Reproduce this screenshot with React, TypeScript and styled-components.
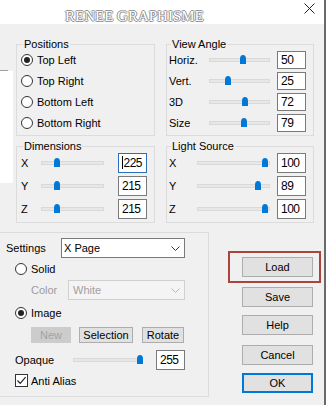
import React from 'react';
import styled, { createGlobalStyle } from 'styled-components';

const GlobalStyle = createGlobalStyle`
  html, body {
    margin: 0;
    padding: 0;
    background: #f0f0f0;
  }
  body {
    font-family: "Liberation Sans", Arial, sans-serif;
    font-size: 11px;
    color: #000;
  }
`;

const viewAngle = [
  { label: 'Horiz.', value: 50, pos: 0.566 },
  { label: 'Vert.', value: 25, pos: 0.31 },
  { label: '3D', value: 72, pos: 0.59 },
  { label: 'Size', value: 79, pos: 0.574 },
];

const dimensions = [
  { label: 'X', value: 225, pos: 0.254, focus: true },
  { label: 'Y', value: 215, pos: 0.238 },
  { label: 'Z', value: 215, pos: 0.238 },
];

const lightSource = [
  { label: 'X', value: 100, pos: 0.945 },
  { label: 'Y', value: 89, pos: 0.85 },
  { label: 'Z', value: 100, pos: 0.945 },
];

const positions = ['Top Left', 'Top Right', 'Bottom Left', 'Bottom Right'];

export default function App() {
  return (
    <>
      <GlobalStyle />
      <Window>
        <TitleBar>
          <TitleText>RENEE GRAPHISME</TitleText>
          <CloseIcon width="11" height="11" viewBox="0 0 11 11">
            <path d="M0.5 0.5 L10.5 10.5 M10.5 0.5 L0.5 10.5" stroke="#222" strokeWidth="1" />
          </CloseIcon>
        </TitleBar>

        <Content>
          <TopArea>
            <Strip>
              <StripLine />
              <StripFill />
            </Strip>
            <Groups>
              <Group $pl={4}>
                <Legend>Positions</Legend>
                <Rows>
                  {positions.map((p, i) => (
                    <RadioRow key={p} $h={21}>
                      <Radio $checked={i === 0} />
                      {p}
                    </RadioRow>
                  ))}
                </Rows>
              </Group>

              <Group $pl={2}>
                <Legend>View Angle</Legend>
                <Rows>
                  {viewAngle.map((r) => (
                    <SliderRow key={r.label} $h={21}>
                      <RowLabel $w={40}>{r.label}</RowLabel>
                      <Slider w={61} pos={r.pos} />
                      <NumBox $h={18} $gap={7}>{r.value}</NumBox>
                    </SliderRow>
                  ))}
                </Rows>
              </Group>

              <Group $pl={4}>
                <Legend>Dimensions</Legend>
                <Rows>
                  {dimensions.map((r) => (
                    <SliderRow key={r.label} $h={23}>
                      <RowLabel $w={20}>{r.label}</RowLabel>
                      <Slider w={63} pos={r.pos} />
                      <NumBox $h={20} $gap={14} $focus={r.focus}>
                        {r.focus && <Caret />}
                        {r.value}
                      </NumBox>
                    </SliderRow>
                  ))}
                </Rows>
              </Group>

              <Group $pl={2}>
                <Legend>Light Source</Legend>
                <Rows>
                  {lightSource.map((r) => (
                    <SliderRow key={r.label} $h={23}>
                      <RowLabel $w={28}>{r.label}</RowLabel>
                      <Slider w={73} pos={r.pos} />
                      <NumBox $h={20} $gap={7}>{r.value}</NumBox>
                    </SliderRow>
                  ))}
                </Rows>
              </Group>
            </Groups>
          </TopArea>

          <BottomArea>
            <SettingsPanel>
              <PanelRow $mt={5} $h={20}>
                <RowLabel $w={55}>Settings</RowLabel>
                <Combo $w={124}>
                  X Page
                  <Chevron color="#333" />
                </Combo>
              </PanelRow>
              <PanelRow $mt={3} $ml={9} $h={16}>
                <Radio />
                Solid
              </PanelRow>
              <PanelRow $mt={3} $ml={25} $h={20}>
                <RowLabel $w={37} $muted>Color</RowLabel>
                <Combo $w={117} $disabled>
                  White
                  <Chevron color="#b8b8b8" />
                </Combo>
              </PanelRow>
              <PanelRow $mt={5} $ml={9} $h={16}>
                <Radio $checked />
                Image
              </PanelRow>
              <PanelRow $mt={6} $ml={25} $h={16}>
                <SmallButton $w={40} $disabled>New</SmallButton>
                <SmallButton $w={54} $ml={8}>Selection</SmallButton>
                <SmallButton $w={42} $ml={9}>Rotate</SmallButton>
              </PanelRow>
              <PanelRow $mt={7} $ml={9} $h={20}>
                <RowLabel $w={58}>Opaque</RowLabel>
                <Slider w={70} pos={0.971} />
                <NumBox $h={20} $gap={13}>255</NumBox>
              </PanelRow>
              <PanelRow $mt={4} $ml={9} $h={13}>
                <CheckBox>
                  <svg width="11" height="11" viewBox="0 0 11 11">
                    <path d="M1.5 5.5 L4.2 8.3 L9.6 2.2" fill="none" stroke="#222" strokeWidth="1.2" />
                  </svg>
                </CheckBox>
                Anti Alias
              </PanelRow>
            </SettingsPanel>

            <ButtonColumn>
              <LoadFrame>
                <PushButton>Load</PushButton>
              </LoadFrame>
              <PushButton $mt={4}>Save</PushButton>
              <PushButton $mt={8}>Help</PushButton>
              <PushButton $mt={10}>Cancel</PushButton>
              <PushButton $mt={8} $default>OK</PushButton>
            </ButtonColumn>
          </BottomArea>
        </Content>
      </Window>
    </>
  );
}

function Slider({ w, pos }: { w: number; pos: number }) {
  return (
    <Track $w={w}>
      <Thumb style={{ left: `${pos * 100}%` }} />
    </Track>
  );
}

function Chevron({ color }: { color: string }) {
  return (
    <ChevronSvg width="9" height="5" viewBox="0 0 9 5">
      <path d="M0.5 0.5 L4.5 4.5 L8.5 0.5" fill="none" stroke={color} strokeWidth="1" />
    </ChevronSvg>
  );
}

const Window = styled.div`
  width: 326px;
  height: 405px;
  box-sizing: border-box;
  border-right: 2px solid #6a6a6a;
  background: #f0f0f0;
  overflow: hidden;
`;

const TitleBar = styled.div`
  height: 24px;
  background: #fff;
  display: flex;
  align-items: flex-start;
  padding-left: 65px;
`;

const TitleText = styled.span`
  font-family: "Liberation Serif", "Times New Roman", serif;
  font-size: 15px;
  line-height: 15px;
  margin-top: 9px;
  color: #fff;
  text-shadow: -1px 0 #8e8e8e, 1px 0 #8e8e8e, 0 -1px #8e8e8e, 0 1px #8e8e8e;
`;

const CloseIcon = styled.svg`
  margin-left: auto;
  margin-right: 9px;
  margin-top: 3px;
`;

const Content = styled.div`
  padding-top: 14px;
`;

const TopArea = styled.div`
  display: flex;
  align-items: flex-start;
`;

const Strip = styled.div`
  width: 13px;
  margin-top: 32px;
  display: flex;
  flex-direction: column;
`;

const StripLine = styled.div`
  width: 8px;
  height: 1px;
  background: #a0a0a0;
`;

const StripFill = styled.div`
  width: 13px;
  height: 112px;
  background: #fff;
`;

const Groups = styled.div`
  margin-left: 3px;
  display: grid;
  grid-template-columns: 139px 148px;
  column-gap: 11px;
  row-gap: 4px;
`;

const Group = styled.fieldset<{ $pl: number }>`
  margin: 0;
  min-width: 0;
  border: 1px solid #dcdcdc;
  padding: 0 7px 2px ${(p) => p.$pl}px;
`;

const Legend = styled.legend`
  padding: 0 1px;
  margin-left: 2px;
  font-size: 11px;
  line-height: 13px;
`;

const Rows = styled.div`
  margin-top: -2px;
`;

const RadioRow = styled.div<{ $h: number }>`
  height: ${(p) => p.$h}px;
  display: flex;
  align-items: center;
  gap: 4px;
`;

const Radio = styled.span<{ $checked?: boolean }>`
  width: 12px;
  height: 12px;
  flex: none;
  box-sizing: border-box;
  border: 1px solid #333;
  border-radius: 50%;
  background: #fff;
  display: flex;
  align-items: center;
  justify-content: center;
  &::after {
    content: '';
    width: 6px;
    height: 6px;
    border-radius: 50%;
    background: ${(p) => (p.$checked ? '#222' : 'transparent')};
  }
`;

const SliderRow = styled.div<{ $h: number }>`
  height: ${(p) => p.$h}px;
  display: flex;
  align-items: center;
`;

const RowLabel = styled.span<{ $w: number; $muted?: boolean }>`
  width: ${(p) => p.$w}px;
  flex: none;
  color: ${(p) => (p.$muted ? '#9d9d9d' : '#000')};
`;

const Track = styled.div<{ $w: number }>`
  position: relative;
  width: ${(p) => p.$w}px;
  height: 4px;
  flex: none;
  box-sizing: border-box;
  border: 1px solid #d9d9d9;
  background: #e7e7e7;
`;

const Thumb = styled.span`
  position: absolute;
  top: -4px;
  width: 6px;
  height: 9px;
  margin-left: -3px;
  background: #0078d7;
  border-radius: 3px 3px 0 0 / 4px 4px 0 0;
`;

const NumBox = styled.div<{ $h: number; $gap: number; $focus?: boolean }>`
  width: 29px;
  height: ${(p) => p.$h}px;
  margin-left: ${(p) => p.$gap}px;
  flex: none;
  box-sizing: border-box;
  border: 1px solid ${(p) => (p.$focus ? '#2b6fb8' : '#7a7a7a')};
  background: #fff;
  padding-left: 3px;
  display: flex;
  align-items: center;
  font-size: 12px;
  letter-spacing: -0.5px;
`;

const Caret = styled.span`
  width: 1px;
  height: 13px;
  background: #000;
  margin-right: 0.5px;
`;

const BottomArea = styled.div`
  display: flex;
  align-items: flex-start;
  margin-top: 9px;
`;

const SettingsPanel = styled.div`
  width: 209px;
  height: 165px;
  box-sizing: border-box;
  border: 1px solid #dcdcdc;
  border-left: none;
  padding-left: 6px;
  display: flex;
  flex-direction: column;
`;

const PanelRow = styled.div<{ $mt: number; $ml?: number; $h: number }>`
  margin-top: ${(p) => p.$mt}px;
  margin-left: ${(p) => p.$ml ?? 0}px;
  height: ${(p) => p.$h}px;
  display: flex;
  align-items: center;
  gap: 0;
  & > ${Radio} {
    margin-right: 4px;
  }
`;

const Combo = styled.div<{ $w: number; $disabled?: boolean }>`
  width: ${(p) => p.$w}px;
  height: 20px;
  flex: none;
  box-sizing: border-box;
  border: 1px solid ${(p) => (p.$disabled ? '#d0d0d0' : '#7a7a7a')};
  background: ${(p) => (p.$disabled ? '#f4f4f4' : '#fff')};
  color: ${(p) => (p.$disabled ? '#a0a0a0' : '#000')};
  padding-left: ${(p) => (p.$disabled ? 4 : 2)}px;
  display: flex;
  align-items: center;
`;

const ChevronSvg = styled.svg`
  margin-left: auto;
  margin-right: 4px;
`;

const SmallButton = styled.div<{ $w: number; $ml?: number; $disabled?: boolean }>`
  width: ${(p) => p.$w}px;
  height: 16px;
  margin-left: ${(p) => p.$ml ?? 0}px;
  box-sizing: border-box;
  border: 1px solid ${(p) => (p.$disabled ? '#cccccc' : '#adadad')};
  background: ${(p) => (p.$disabled ? '#cccccc' : '#e1e1e1')};
  color: ${(p) => (p.$disabled ? '#a3a3a3' : '#000')};
  display: flex;
  align-items: center;
  justify-content: center;
`;

const CheckBox = styled.span`
  width: 13px;
  height: 13px;
  box-sizing: border-box;
  border: 1px solid #333;
  background: #fff;
  margin-right: 3px;
  display: flex;
  align-items: center;
  justify-content: center;
`;

const ButtonColumn = styled.div`
  margin-left: 19px;
  margin-top: 19px;
  padding-left: 14px;
  display: flex;
  flex-direction: column;
`;

const LoadFrame = styled.div`
  margin-left: -14px;
  padding: 4px 6px 4px 12px;
  border: 2px solid #a8453c;
`;

const PushButton = styled.div<{ $mt?: number; $default?: boolean }>`
  width: 71px;
  height: 20px;
  margin-top: ${(p) => p.$mt ?? 0}px;
  box-sizing: border-box;
  border: ${(p) => (p.$default ? '2px solid #0078d7' : '1px solid #adadad')};
  background: #e1e1e1;
  display: flex;
  align-items: center;
  justify-content: center;
`;
